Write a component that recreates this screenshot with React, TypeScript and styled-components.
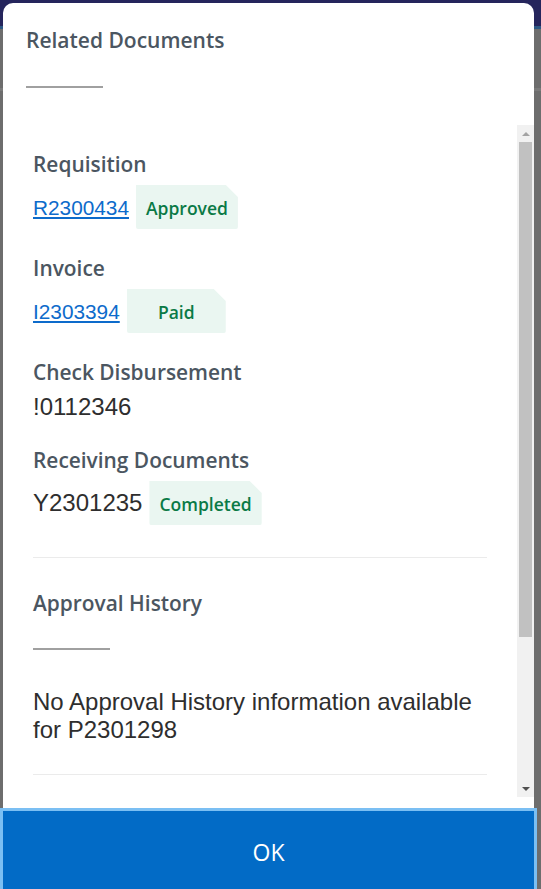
import React from "react";
import styled, { createGlobalStyle } from "styled-components";

const GlobalStyle = createGlobalStyle`
  html, body {
    margin: 0;
    padding: 0;
    width: 541px;
    height: 889px;
    overflow: hidden;
  }
  * { box-sizing: border-box; }
`;

const Page = styled.div`
  width: 541px;
  height: 889px;
  overflow: hidden;
  padding-top: 3px;
  background: linear-gradient(
    #25255c 0 26px,
    #2c5884 26px 29px,
    #6d6d6d 29px 88px,
    #7a7a7a 88px 91px,
    #6d6d6d 91px
  );
`;

const Modal = styled.div`
  margin-left: 3px;
  width: 531px;
  background: #ffffff;
  border-radius: 10px 10px 0 0;
  display: flex;
  flex-direction: column;
  & > * {
    flex-shrink: 0;
  }
`;

const Header = styled.div`
  padding: 23px 23px 0;
`;

const Heading = styled.div`
  font-family: "Open Sans", "Noto Sans", sans-serif;
  font-weight: 600;
  font-size: 21px;
  line-height: 29px;
  color: #4b5661;
  white-space: nowrap;
`;

const Rule = styled.div<{ $top: number }>`
  width: 77px;
  height: 2px;
  background: #a0a0a0;
  margin-top: ${(p) => p.$top}px;
`;

const Body = styled.div`
  margin-top: 37px;
  height: 672px;
  display: flex;
`;

const Content = styled.div`
  flex: 1;
  overflow: hidden;
  padding: 25px 30px 0;
`;

const DocSection = styled.section`
  display: flex;
  flex-direction: column;
  gap: 7px;
  margin-bottom: 25px;
`;

const Label = styled.div`
  font-family: "Open Sans", "Noto Sans", sans-serif;
  font-weight: 600;
  font-size: 20.9px;
  line-height: 28px;
  color: #4b5661;
  white-space: nowrap;
`;

const ValueRow = styled.div`
  display: flex;
  align-items: baseline;
  gap: 7px;
`;

const DocLink = styled.a`
  font-family: "Liberation Sans", Arial, sans-serif;
  font-size: 20.8px;
  color: #0d6bcb;
  text-decoration: underline;
  text-decoration-thickness: 1.5px;
  text-underline-offset: 2px;
  cursor: pointer;
`;

const PlainValue = styled.span<{ $tall?: boolean }>`
  font-family: "Liberation Sans", Arial, sans-serif;
  font-size: 24px;
  line-height: ${(p) => (p.$tall ? "32px" : "normal")};
  margin: ${(p) => (p.$tall ? "-2px 0" : "0")};
  color: #2e2e2e;
`;

const Badge = styled.span`
  display: inline-block;
  height: 44px;
  min-width: 99px;
  padding: 3px 10px 0;
  line-height: 41px;
  text-align: center;
  font-family: "Open Sans", "Noto Sans", sans-serif;
  font-weight: 600;
  font-size: 17.5px;
  color: #0a7a46;
  background: #eaf6f1;
  border-radius: 0 0 2px 2px;
  clip-path: polygon(0 0, calc(100% - 12px) 0, 100% 12px, 100% 100%, 0 100%);
`;

const Divider = styled.hr<{ $top: number }>`
  border: 0;
  height: 1px;
  background: #ebebeb;
  margin: ${(p) => p.$top}px 0 0;
`;

const SectionBlock = styled.div`
  padding-top: 31px;
`;

const EmptyText = styled.p`
  margin: 38px 0 0;
  font-family: "Liberation Sans", Arial, sans-serif;
  font-size: 24px;
  line-height: 28px;
  color: #2e2e2e;
`;

const ScrollBar = styled.div`
  width: 17px;
  background: #f1f1f1;
  display: flex;
  flex-direction: column;
`;

const ScrollArrow = styled.div<{ $dir: "up" | "down"; $active?: boolean }>`
  height: 17px;
  display: flex;
  align-items: center;
  justify-content: center;
  &::before {
    content: "";
    width: 0;
    height: 0;
    border-left: 4px solid transparent;
    border-right: 4px solid transparent;
    ${(p) =>
      p.$dir === "up"
        ? `border-bottom: 4px solid ${p.$active ? "#505050" : "#a3a3a3"};`
        : `border-top: 4px solid ${p.$active ? "#505050" : "#a3a3a3"};`}
  }
`;

const ScrollThumb = styled.div`
  height: 495px;
  margin: 0 2px;
  background: #c1c1c1;
`;

const ScrollSpacer = styled.div`
  flex: 1;
`;

const Footer = styled.div`
  padding-top: 11px;
`;

const OkButton = styled.button`
  display: block;
  width: 537px;
  height: 88px;
  margin-left: -3px;
  border: 3px solid #7bbff3;
  background: #026bc6;
  color: #ffffff;
  font-family: "Open Sans", "Noto Sans", sans-serif;
  font-size: 23px;
  font-weight: 400;
  padding: 0;
  cursor: pointer;
`;

type Doc = {
  label: string;
  value: string;
  link?: boolean;
  status?: string;
};

const docs: Doc[] = [
  { label: "Requisition", value: "R2300434", link: true, status: "Approved" },
  { label: "Invoice", value: "I2303394", link: true, status: "Paid" },
  { label: "Check Disbursement", value: "!0112346" },
  { label: "Receiving Documents", value: "Y2301235", status: "Completed" },
];

export default function App() {
  return (
    <>
      <GlobalStyle />
      <Page>
        <Modal>
          <Header>
            <Heading>Related Documents</Heading>
            <Rule $top={31} />
          </Header>
          <Body>
            <Content>
              {docs.map((d) => (
                <DocSection key={d.label}>
                  <Label>{d.label}</Label>
                  {d.status ? (
                    <ValueRow>
                      {d.link ? (
                        <DocLink>{d.value}</DocLink>
                      ) : (
                        <PlainValue>{d.value}</PlainValue>
                      )}
                      <Badge>{d.status}</Badge>
                    </ValueRow>
                  ) : (
                    <PlainValue $tall>{d.value}</PlainValue>
                  )}
                </DocSection>
              ))}
              <Divider $top={32} />
              <SectionBlock>
                <Label>Approval History</Label>
                <Rule $top={31} />
                <EmptyText>
                  No Approval History information available for P2301298
                </EmptyText>
              </SectionBlock>
              <Divider $top={30} />
            </Content>
            <ScrollBar>
              <ScrollArrow $dir="up" />
              <ScrollThumb />
              <ScrollSpacer />
              <ScrollArrow $dir="down" $active />
            </ScrollBar>
          </Body>
          <Footer>
            <OkButton>OK</OkButton>
          </Footer>
        </Modal>
      </Page>
    </>
  );
}
